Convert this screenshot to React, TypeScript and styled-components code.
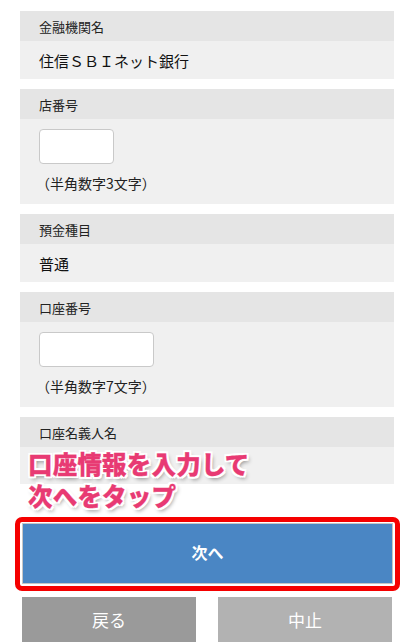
import React from "react";
import styled, { createGlobalStyle } from "styled-components";

const Global = createGlobalStyle`
  html, body { margin: 0; padding: 0; background: #ffffff; }
  body { font-family: "Noto Sans CJK JP", "Noto Sans", sans-serif; color: #222; }
`;

const Page = styled.div`
  position: relative;
  width: 414px;
  padding: 11px 20px 0;
  box-sizing: border-box;
  display: flex;
  flex-direction: column;
`;

const Fields = styled.div`
  display: flex;
  flex-direction: column;
  gap: 10px;
`;

const Section = styled.section`
  display: flex;
  flex-direction: column;
`;

const Header = styled.div`
  height: 30px;
  background: #e5e5e5;
  padding-left: 19px;
  display: flex;
  align-items: center;
  font-size: 13px;
  color: #222;
`;

const Body = styled.div<{ $h?: number }>`
  background: #f0f0f0;
  padding: 0 19px;
  min-height: ${(p) => (p.$h ? `${p.$h}px` : "auto")};
  display: flex;
  flex-direction: column;
  justify-content: center;
`;

const InputBody = styled.div`
  background: #f0f0f0;
  padding: 10px 19px 11px;
  display: flex;
  flex-direction: column;
  align-items: flex-start;
`;

const Value = styled.div`
  font-size: 15px;
  color: #111;
`;

const Input = styled.input<{ $w: number }>`
  width: ${(p) => p.$w}px;
  height: 35px;
  box-sizing: border-box;
  border: 1px solid #c9c9c9;
  border-radius: 4px;
  background: #fff;
  margin: 0;
`;

const Note = styled.div`
  margin-top: 9px;
  font-size: 14px;
  line-height: 20px;
  color: #222;
  margin-left: -3px;
`;

const NextWrap = styled.div`
  position: relative;
  margin: 39px 1px 0 2px;
`;

const NextButton = styled.button`
  width: 100%;
  height: 61px;
  background: #4a86c4;
  border: 1px solid #c6c6c6;
  box-sizing: border-box;
  color: #fff;
  font-family: inherit;
  font-size: 16px;
  font-weight: bold;
  display: flex;
  align-items: center;
  justify-content: center;
  padding: 0 0 4px;
`;

const Highlight = styled.div`
  position: absolute;
  left: -7px;
  right: -7px;
  top: -6px;
  bottom: -7px;
  border: 5px solid #f50000;
  border-radius: 7px;
  pointer-events: none;
`;

const BottomRow = styled.div`
  display: grid;
  grid-template-columns: 174px 174px;
  justify-content: space-between;
  margin: 13px 2px 0;
`;

const GrayButton = styled.button<{ $tone: string }>`
  height: 45px;
  background: ${(p) => p.$tone};
  border: none;
  color: #fff;
  font-family: inherit;
  font-size: 17px;
  padding: 0;
`;

const Annotation = styled.div`
  position: absolute;
  left: 28px;
  top: 448px;
  font-size: 24.5px;
  line-height: 32px;
  font-weight: 900;
  color: #e83a73;
  letter-spacing: 0.2px;
  -webkit-text-stroke: 0.3px #e83a73;
  text-shadow:
    -2px -2px 0 #fff, 2px -2px 0 #fff, -2px 2px 0 #fff, 2px 2px 0 #fff,
    0 -2px 0 #fff, 0 2px 0 #fff, -2px 0 0 #fff, 2px 0 0 #fff,
    2px 3px 4px rgba(0, 0, 0, 0.45);
  pointer-events: none;
`;

export default function App() {
  return (
    <>
      <Global />
      <Page>
        <Fields>
          <Section>
            <Header>金融機関名</Header>
            <Body $h={38}>
              <Value>住信ＳＢＩネット銀行</Value>
            </Body>
          </Section>
          <Section>
            <Header>店番号</Header>
            <InputBody>
              <Input $w={75} />
              <Note>（半角数字3文字）</Note>
            </InputBody>
          </Section>
          <Section>
            <Header>預金種目</Header>
            <Body $h={38}>
              <Value>普通</Value>
            </Body>
          </Section>
          <Section>
            <Header>口座番号</Header>
            <InputBody>
              <Input $w={115} />
              <Note>（半角数字7文字）</Note>
            </InputBody>
          </Section>
          <Section>
            <Header>口座名義人名</Header>
            <Body $h={37} />
          </Section>
        </Fields>
        <NextWrap>
          <NextButton>次へ</NextButton>
          <Highlight />
        </NextWrap>
        <BottomRow>
          <GrayButton $tone="#9a9a9a">戻る</GrayButton>
          <GrayButton $tone="#b2b2b2">中止</GrayButton>
        </BottomRow>
        <Annotation>
          口座情報を入力して
          <br />
          次へをタップ
        </Annotation>
      </Page>
    </>
  );
}
